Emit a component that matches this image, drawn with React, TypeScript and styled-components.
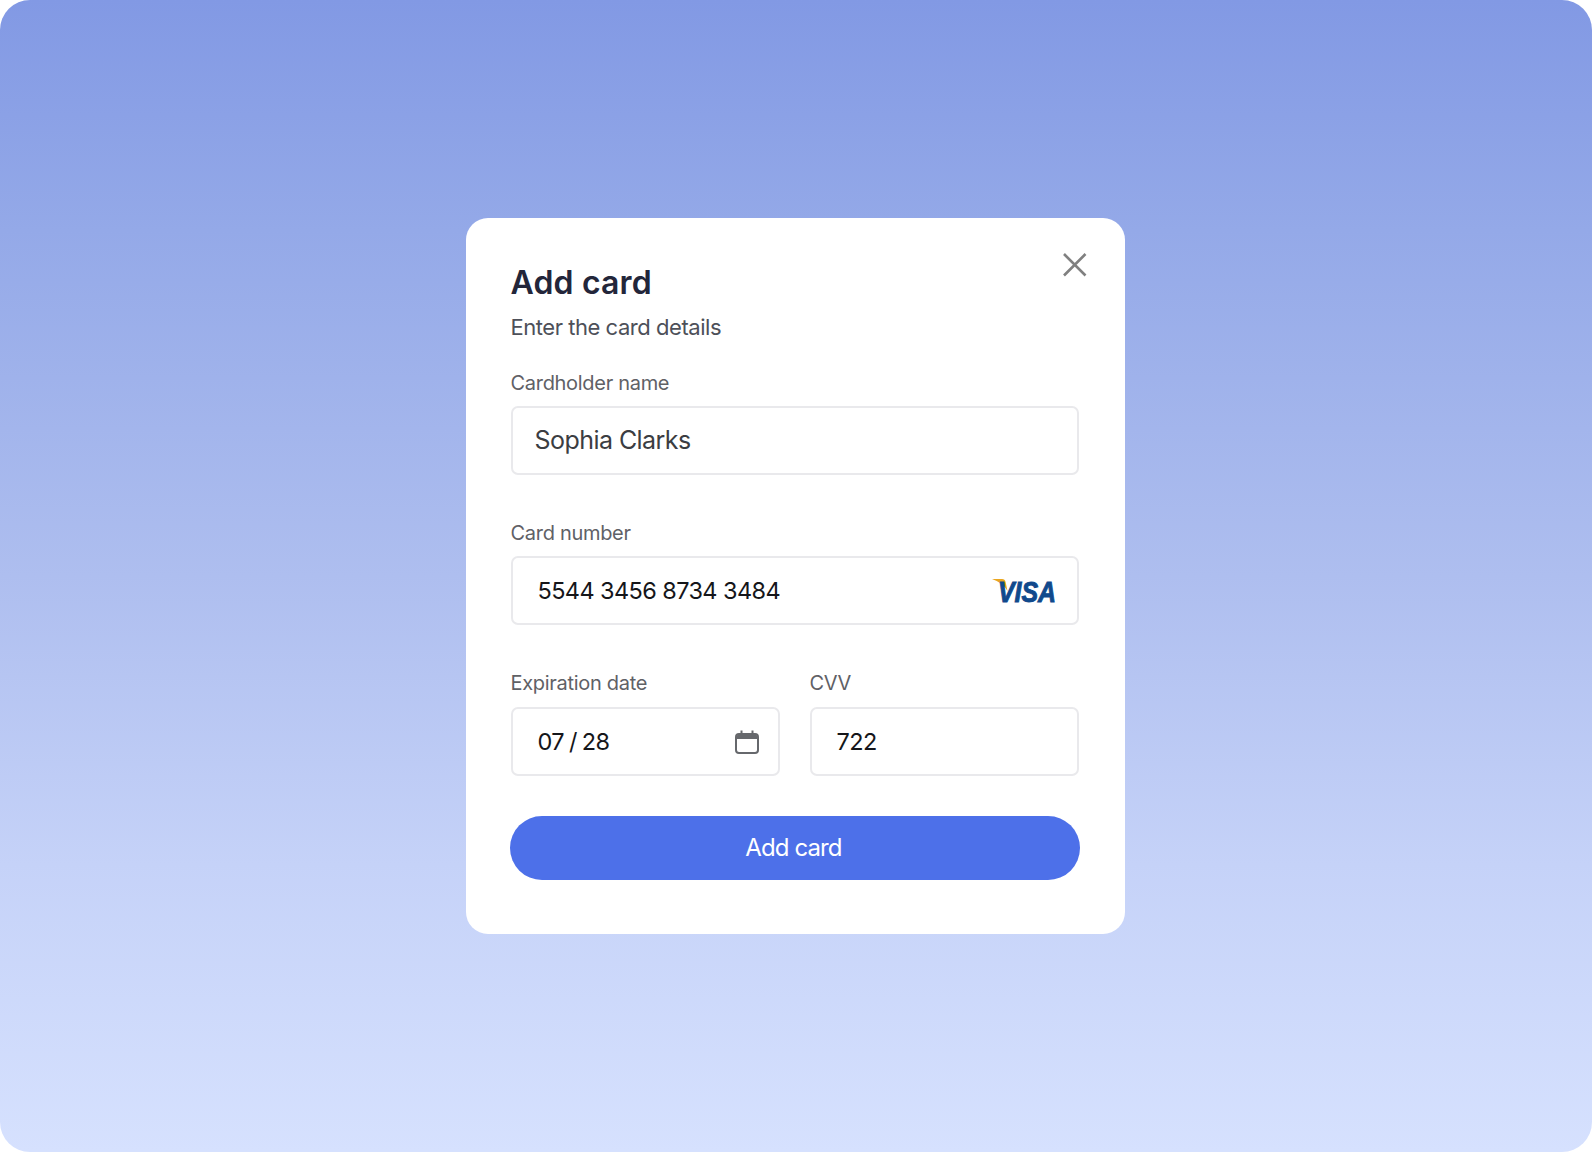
import React from "react";
import styled, { createGlobalStyle } from "styled-components";

const Global = createGlobalStyle`
  html, body { margin: 0; padding: 0; background: #fff; }
  * { box-sizing: border-box; }
`;

const Page = styled.div`
  width: 1592px;
  height: 1152px;
  border-radius: 30px;
  padding-right: 2px;
  background: linear-gradient(180deg, #8299e4 0%, #94a9e8 20%, #aebeef 50%, #c5d2f8 75%, #d6e1fe 100%);
  display: flex;
  align-items: center;
  justify-content: center;
  font-family: Inter, "Liberation Sans", sans-serif;
`;

const Card = styled.section`
  position: relative;
  width: 659px;
  height: 716px;
  background: #fff;
  border-radius: 22px;
  padding: 45px 46px 0 45px;
`;

const Title = styled.h1`
  margin: 0;
  font-size: 32px;
  line-height: 40px;
  font-weight: 600;
  letter-spacing: 0.15px;
  color: #23263a;
`;

const Subtitle = styled.p`
  margin: 10px 0 0;
  font-size: 22px;
  line-height: 28px;
  letter-spacing: -0.46px;
  color: #4d5059;
`;

const Close = styled.button`
  position: absolute;
  top: 34px;
  right: 37px;
  width: 26px;
  height: 26px;
  padding: 0;
  border: 0;
  background: none;
  color: #808080;
  display: flex;
`;

const Form = styled.form`
  margin-top: 30px;
  display: flex;
  flex-direction: column;
`;

const Fields = styled.div`
  display: flex;
  flex-direction: column;
  gap: 46px;
`;

const Field = styled.div<{ $gap?: number }>`
  flex: 1;
  min-width: 0;
  display: flex;
  flex-direction: column;
  gap: ${(p) => p.$gap ?? 11}px;
`;

const Label = styled.label`
  font-size: 20px;
  line-height: 24px;
  letter-spacing: -0.3px;
  color: #5f6166;
`;

const InputBox = styled.div<{ $indent: number }>`
  height: 69px;
  border: 2px solid #e9e9ec;
  border-radius: 7px;
  display: flex;
  align-items: center;
  justify-content: space-between;
  padding: 0 19px 0 ${(p) => p.$indent}px;
`;

const Value = styled.span<{ $soft?: boolean; $narrowWords?: boolean }>`
  font-size: ${(p) => (p.$soft ? 25 : 23.5)}px;
  letter-spacing: ${(p) => (p.$soft ? -0.55 : -0.6)}px;
  word-spacing: ${(p) => (p.$narrowWords ? -1 : 0)}px;
  padding-bottom: ${(p) => (p.$soft ? 2 : 0)}px;
  color: ${(p) => (p.$soft ? "#3b3d42" : "#15161a")};
`;

const Row = styled.div`
  display: flex;
  gap: 30px;
`;

const Submit = styled.button`
  margin: 40px -2px 0 -1px;
  width: 570px;
  height: 64px;
  border: 0;
  border-radius: 32px;
  padding: 0 2px 2px 0;
  background: #4d70e9;
  color: #fff;
  font-family: inherit;
  font-size: 24px;
  letter-spacing: -0.9px;
`;

const VisaLogo = () => (
  <svg width="65" height="24" viewBox="0 0 65 24" overflow="visible">
    <path d="M-1 0 L9 0 Q12 0 12.6 3 L14.5 12 Q10.5 4 -1 0 Z" fill="#eaa61f" />
    <text
      x="5"
      y="22.5"
      fontFamily="Liberation Sans, sans-serif"
      fontStyle="italic"
      fontWeight="700"
      fontSize="30"
      textLength="58"
      lengthAdjust="spacingAndGlyphs"
      stroke="#10498c"
      strokeWidth="1"
      fill="#10498c"
    >
      VISA
    </text>
  </svg>
);

const CalendarIcon = () => (
  <svg width="26" height="26" viewBox="0 0 26 26" fill="none">
    <rect x="3" y="5" width="22" height="19" rx="3" fill="#fff" stroke="#66686c" strokeWidth="2" />
    <path d="M4 6.5 Q4 5 6 5 H22 Q24 5 24 6.5 V10 H4 Z" fill="#66686c" />
    <path d="M8.5 1.5 V6 M19.5 1.5 V6" stroke="#66686c" strokeWidth="2" />
  </svg>
);

export default function App() {
  return (
    <>
      <Global />
      <Page>
        <Card>
          <Close type="button" aria-label="Close">
            <svg width="26" height="26" viewBox="0 0 26 26" fill="none" stroke="currentColor" strokeWidth="2.6">
              <path d="M2 2 L23.5 23.5 M23.5 2 L2 23.5" />
            </svg>
          </Close>
          <Title>Add card</Title>
          <Subtitle>Enter the card details</Subtitle>
          <Form>
            <Fields>
              <Field>
                <Label>Cardholder name</Label>
                <InputBox $indent={22}>
                  <Value $soft>Sophia Clarks</Value>
                </InputBox>
              </Field>
              <Field>
                <Label>Card number</Label>
                <InputBox $indent={25}>
                  <Value>5544 3456 8734 3484</Value>
                  <VisaLogo />
                </InputBox>
              </Field>
              <Row>
                <Field $gap={12}>
                  <Label>Expiration date</Label>
                  <InputBox $indent={25}>
                    <Value $narrowWords>07 / 28</Value>
                    <CalendarIcon />
                  </InputBox>
                </Field>
                <Field $gap={12}>
                  <Label>CVV</Label>
                  <InputBox $indent={25}>
                    <Value>722</Value>
                  </InputBox>
                </Field>
              </Row>
            </Fields>
            <Submit type="button">Add card</Submit>
          </Form>
        </Card>
      </Page>
    </>
  );
}
